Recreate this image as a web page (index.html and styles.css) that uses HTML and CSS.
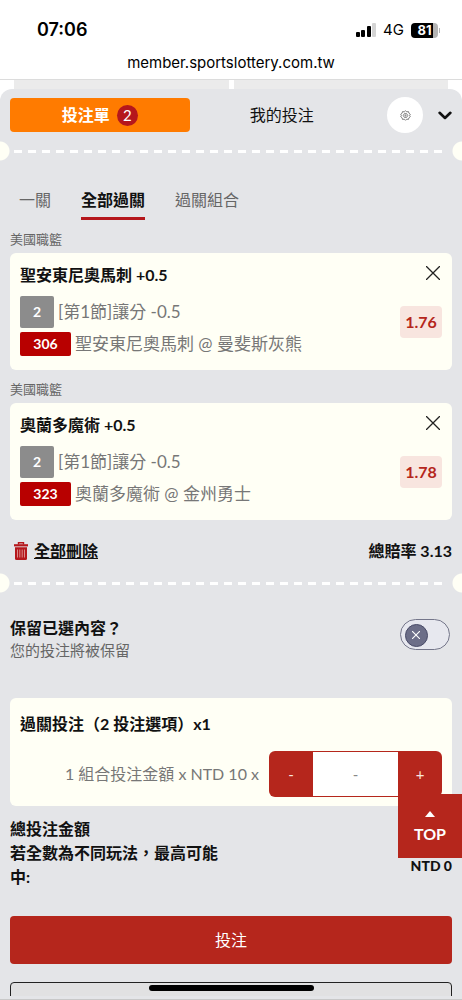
FILE: index.html
```html
<!DOCTYPE html>
<html lang="zh-Hant">
<head>
<meta charset="utf-8">
<meta name="viewport" content="width=device-width, initial-scale=1">
<title>投注單</title>
<link rel="stylesheet" href="styles.css">
</head>
<body>
<div class="app">
  <header class="browser">
    <div class="status">
      <time class="clock">07:06</time>
      <div class="indicators">
        <svg class="signal" viewBox="0 0 20 14" aria-hidden="true">
          <rect x="0" y="9" width="4" height="5" rx="1"/>
          <rect x="5" y="7" width="4" height="7" rx="1"/>
          <rect x="11" y="3" width="4" height="11" rx="1"/>
          <rect x="16" y="0" width="4" height="14" rx="1" fill="#d4d4d4"/>
        </svg>
        <span class="network">4G</span>
        <span class="battery"><span class="level">81</span></span>
      </div>
    </div>
    <div class="address">member.sportslottery.com.tw</div>
  </header>

  <div class="backdrop"><span></span><span></span></div>

  <main class="sheet">
    <nav class="top-tabs">
      <button class="slip-tab" type="button">投注單 <span class="count">2</span></button>
      <button class="mine-tab" type="button">我的投注</button>
      <button class="settings" type="button" aria-label="設定">
        <svg viewBox="0 0 24 24" fill="none" stroke="#666" stroke-width="1.800" aria-hidden="true">
          <path d="M9.500 4 12 1.500 14.500 4 18.500 3.500 19.500 7 22.500 9.500 21 12 22.500 14.500 19.500 17 18.500 20.500 14.500 20 12 22.500 9.500 20 5.500 20.500 4.500 17 1.500 14.500 3 12 1.500 9.500 4.500 7 5.500 3.500Z" stroke-linejoin="round"/>
          <path d="M9.500 8H14.500L17 12 14.500 16H9.500L7 12Z"/>
          <circle cx="12" cy="12" r="1.200"/>
        </svg>
      </button>
      <button class="collapse" type="button" aria-label="收合">
        <svg viewBox="0 0 14 9" fill="none" stroke="#111" stroke-width="2.600" stroke-linecap="round" stroke-linejoin="round" aria-hidden="true"><path d="M1.600 1.800 7 7 12.400 1.800"/></svg>
      </button>
    </nav>

    <div class="tear"></div>

    <nav class="modes">
      <button type="button">一關</button>
      <button class="active" type="button">全部過關</button>
      <button type="button">過關組合</button>
    </nav>

    <section class="bet">
      <h2 class="league">美國職籃</h2>
      <article class="card pick">
        <div class="pick-head">
          <h3>聖安東尼奧馬刺 +0.5</h3>
          <button class="close" type="button" aria-label="移除"><svg viewBox="0 0 14 14" fill="none" stroke="#222" stroke-width="1.300" aria-hidden="true"><path d="M0 0 14 14M14 0 0 14"/></svg></button>
        </div>
        <div class="pick-body">
          <div class="lines">
            <p><span class="tag grey">2</span>[第1節]讓分 -0.5</p>
            <p><span class="tag red">306</span>聖安東尼奧馬刺 @ 曼斐斯灰熊</p>
          </div>
          <span class="odds">1.76</span>
        </div>
      </article>
    </section>

    <section class="bet">
      <h2 class="league">美國職籃</h2>
      <article class="card pick">
        <div class="pick-head">
          <h3>奧蘭多魔術 +0.5</h3>
          <button class="close" type="button" aria-label="移除"><svg viewBox="0 0 14 14" fill="none" stroke="#222" stroke-width="1.300" aria-hidden="true"><path d="M0 0 14 14M14 0 0 14"/></svg></button>
        </div>
        <div class="pick-body">
          <div class="lines">
            <p><span class="tag grey">2</span>[第1節]讓分 -0.5</p>
            <p><span class="tag red">323</span>奧蘭多魔術 @ 金州勇士</p>
          </div>
          <span class="odds">1.78</span>
        </div>
      </article>
    </section>

    <div class="totals">
      <button class="clear" type="button">
        <svg viewBox="0 0 14 18" aria-hidden="true">
          <path d="M4.500 2.500V.7H9.500V2.500" fill="none" stroke="#b5171c" stroke-width="1.400"/>
          <rect x="0" y="2.200" width="14" height="2.200" fill="#b5171c"/>
          <path d="M1 5.200H13V16.500Q13 18 11.500 18H2.500Q1 18 1 16.500Z" fill="#b5171c"/>
          <path d="M3.500 7.500V15.500M5.800 7.500V15.500M8.200 7.500V15.500M10.500 7.500V15.500" stroke="#f3d9d4" stroke-width=".6"/>
        </svg>
        <span>全部刪除</span>
      </button>
      <strong>總賠率 3.13</strong>
    </div>

    <div class="tear"></div>

    <section class="keep">
      <label for="keep">
        <strong>保留已選內容？</strong>
        <small>您的投注將被保留</small>
      </label>
      <span class="switch">
        <input id="keep" type="checkbox" role="switch">
        <svg viewBox="0 0 8 8" fill="none" stroke="#fff" stroke-width="1.100" aria-hidden="true"><path d="M0 0 8 8M8 0 0 8"/></svg>
      </span>
    </section>

    <section class="card stake">
      <h3>過關投注（2 投注選項）x1</h3>
      <div class="stake-row">
        <label for="amount">1 組合投注金額 x NTD 10 x</label>
        <div class="stepper">
          <button type="button" aria-label="減少">-</button>
          <input id="amount" type="text" inputmode="numeric" placeholder="-">
          <button type="button" aria-label="增加">+</button>
        </div>
      </div>
    </section>

    <section class="summary">
      <div class="summary-text">
        <p>總投注金額</p>
        <p>若全數為不同玩法，最高可能中:</p>
      </div>
      <strong>NTD 0</strong>
    </section>

    <button class="submit" type="button">投注</button>
    <button class="secondary" type="button" aria-label="關閉"></button>
  </main>

  <a class="to-top" href="#"><svg viewBox="0 0 10 6" aria-hidden="true"><path d="M5 0 10 6H0Z" fill="#fff"/></svg>TOP</a>
  <div class="home-area"></div>
</div>
</body>
</html>
```
FILE: styles.css
```css
* { box-sizing: border-box; }

body, h2, h3, p { margin: 0; }

body {
  background: #fff;
  color: #111;
  font: 16px/24px Lato, "Noto Sans CJK TC", sans-serif;
}

button, input { font: inherit; color: inherit; }

button {
  padding: 0;
  border: 0;
  background: none;
  cursor: pointer;
}

svg { display: block; }

h3 { font-size: 16px; line-height: 24px; font-weight: 700; }

.app {
  position: relative;
  display: flex;
  flex-direction: column;
  height: 100vh;
  overflow: hidden;
}

/* Browser chrome */
.browser {
  flex: none;
  border-bottom: 1px solid #dcdcdc;
  font-family: Inter, sans-serif;
  color: #000;
}

.status {
  display: flex;
  align-items: center;
  justify-content: space-between;
  padding: 18px 24px 0 37px;
}

.clock { font-size: 18px; font-weight: 600; }

.indicators { display: flex; align-items: center; gap: 7px; }
.signal { width: 20px; height: 14px; }
.network { font-size: 15px; }

.battery {
  position: relative;
  width: 27px;
  height: 15px;
  border-radius: 4px;
  background: linear-gradient(90deg, #000 22px, #b4b4b4 22px);
  color: #fff;
  font-size: 13px;
  line-height: 15px;
  font-weight: 700;
  text-align: center;
}

.battery::after {
  content: "";
  position: absolute;
  top: 5px;
  right: -2px;
  width: 1px;
  height: 5px;
  background: #b4b4b4;
}

.address {
  padding: 9px 0 4px;
  font-size: 15px;
  text-align: center;
}

.backdrop {
  flex: none;
  display: grid;
  grid-template-columns: 1fr 1fr;
  gap: 5px;
  height: 20px;
  margin-bottom: -11px;
  padding: 0 14px;
}

.backdrop span { background: #ebebeb; }

/* Bet slip */
.sheet {
  position: relative;
  flex: 1;
  min-height: 0;
  overflow: hidden;
  padding: 8px 10px 0;
  border-radius: 12px 12px 0 0;
  background: #e4e5e8;
}

.card { border-radius: 6px; background: #fffff5; }

.top-tabs {
  display: grid;
  grid-template-columns: 36fr 37fr 62px 18px;
  align-items: center;
  margin-right: -2px;
}

.top-tabs button { display: flex; align-items: center; justify-content: center; }

.slip-tab {
  gap: 7px;
  height: 34px;
  border-radius: 4px;
  background: #ff7b00;
  color: #fff;
  font-weight: 700;
}

.slip-tab .count {
  width: 21px;
  border-radius: 50%;
  background: #b5171c;
  font-size: 15px;
  line-height: 21px;
  font-weight: 400;
}

.settings {
  justify-self: center;
  width: 36px;
  height: 36px;
  border-radius: 50%;
  background: #fff;
}

.settings svg { width: 11px; height: 11px; }
.collapse svg { width: 14px; height: 9px; }

.tear {
  position: relative;
  height: 20px;
  margin: 8px -10px 0;
}

.tear::before {
  content: "";
  position: absolute;
  inset: 9px 14px 8px;
  background: repeating-linear-gradient(90deg, #fff 0 8px, transparent 8px 14px);
}

.tear::after {
  content: "";
  position: absolute;
  inset: 0;
  background:
    radial-gradient(circle at 0 50%, #fffff5 9px, transparent 10px),
    radial-gradient(circle at 100% 50%, #fffff5 9px, transparent 10px);
}

.modes { display: flex; gap: 30px; padding: 27px 9px 0; }

.modes button {
  padding-bottom: 5px;
  border-bottom: 3px solid transparent;
  color: #666;
}

.modes .active { border-color: #b5171c; color: #111; font-weight: 700; }

.league {
  padding: 9px 0 4px;
  color: #666;
  font-size: 13px;
  line-height: 20px;
  font-weight: 400;
}

.pick { padding: 10px 10px 14px; }
.pick-head, .pick-body { display: flex; align-items: center; justify-content: space-between; }

.close { padding: 3px 2px 7px; }
.close svg { width: 14px; height: 14px; }

.lines { display: grid; gap: 4px; padding-top: 9px; }
.lines p { display: flex; align-items: center; gap: 4px; color: #777; font-size: 17px; }

.tag {
  border-radius: 2px;
  color: #fff;
  font-size: 14px;
  font-weight: 700;
  text-align: center;
}

.grey { width: 34px; background: #8c8c8c; line-height: 32px; }
.red { width: 51px; background: #b80000; line-height: 24px; }

.odds {
  width: 42px;
  border-radius: 4px;
  background: #f8e5df;
  color: #b5261c;
  font-size: 16px;
  line-height: 32px;
  font-weight: 700;
  text-align: center;
}

.totals {
  display: flex;
  align-items: center;
  justify-content: space-between;
  padding: 19px 0 2px 4px;
}

.clear { display: flex; align-items: center; gap: 6px; font-weight: 700; text-decoration: underline; }
.clear svg { width: 14px; height: 18px; }

.keep {
  display: flex;
  align-items: center;
  justify-content: space-between;
  padding: 23px 2px 37px 0;
}

.keep strong, .keep small { display: block; }
.keep small { color: #666; font-size: 15px; line-height: 21px; }

.switch { position: relative; margin-bottom: 8px; }

.switch input {
  display: block;
  appearance: none;
  width: 50px;
  height: 31px;
  margin: 0;
  padding: 4px;
  border: 1px solid #74768a;
  border-radius: 16px;
  background: #e7e8ef;
}

.switch input::before {
  content: "";
  display: block;
  width: 21px;
  height: 21px;
  border: 1px solid #494b68;
  border-radius: 50%;
  background: #6c6e88;
}

.switch input:checked { padding-left: 23px; }
.switch svg { position: absolute; top: 12px; left: 12px; width: 8px; height: 8px; pointer-events: none; }
.switch input:checked + svg { left: 30px; }

.stake { padding: 14px 10px 9px; }

.stake-row {
  display: flex;
  align-items: center;
  justify-content: flex-end;
  gap: 10px;
  padding-top: 15px;
}

.stake-row label { color: #777; }

.stepper {
  display: grid;
  grid-template-columns: 44px 85px 44px;
  height: 46px;
  overflow: hidden;
  border-radius: 6px;
  background: #b5261c;
  font-size: 15px;
}

.stepper button { color: #f8e5df; }

.stepper input {
  min-width: 0;
  margin: 1px 0;
  padding: 0;
  border: 0;
  border-radius: 0;
  background: #fff;
  text-align: center;
}

.stepper input::placeholder { color: #888; opacity: 1; }

.summary {
  display: flex;
  align-items: flex-end;
  justify-content: space-between;
  padding-top: 11px;
  font-weight: 700;
}

.summary-text { width: 50%; }
.summary > strong { padding-bottom: 11px; font-size: 14px; }

.submit {
  display: block;
  width: 100%;
  height: 48px;
  margin-top: 27px;
  border-radius: 4px;
  background: #b5261c;
  color: #fff;
}

.secondary {
  display: block;
  width: 100%;
  height: 48px;
  margin-top: 18px;
  border: 1px solid #222;
  border-radius: 4px;
  background: #e1e1e2;
}

/* Overlays */
.to-top {
  position: absolute;
  right: 0;
  bottom: 142px;
  display: flex;
  flex-direction: column;
  align-items: center;
  justify-content: center;
  gap: 5px;
  width: 64px;
  height: 64px;
  padding-top: 4px;
  background: #b5261c;
  color: #fff;
  font-size: 16px;
  font-weight: 700;
  text-decoration: none;
}

.to-top svg { width: 10px; height: 6px; }

.home-area {
  position: absolute;
  right: 0;
  bottom: 0;
  left: 0;
  height: 4px;
  border-bottom: 1px solid #c8c8c8;
  background: #e4e5e8;
}

.home-area::before {
  content: "";
  position: absolute;
  bottom: 8px;
  left: 50%;
  width: 165px;
  height: 6px;
  margin-left: -82px;
  border-radius: 3px;
  background: #000;
}
```
